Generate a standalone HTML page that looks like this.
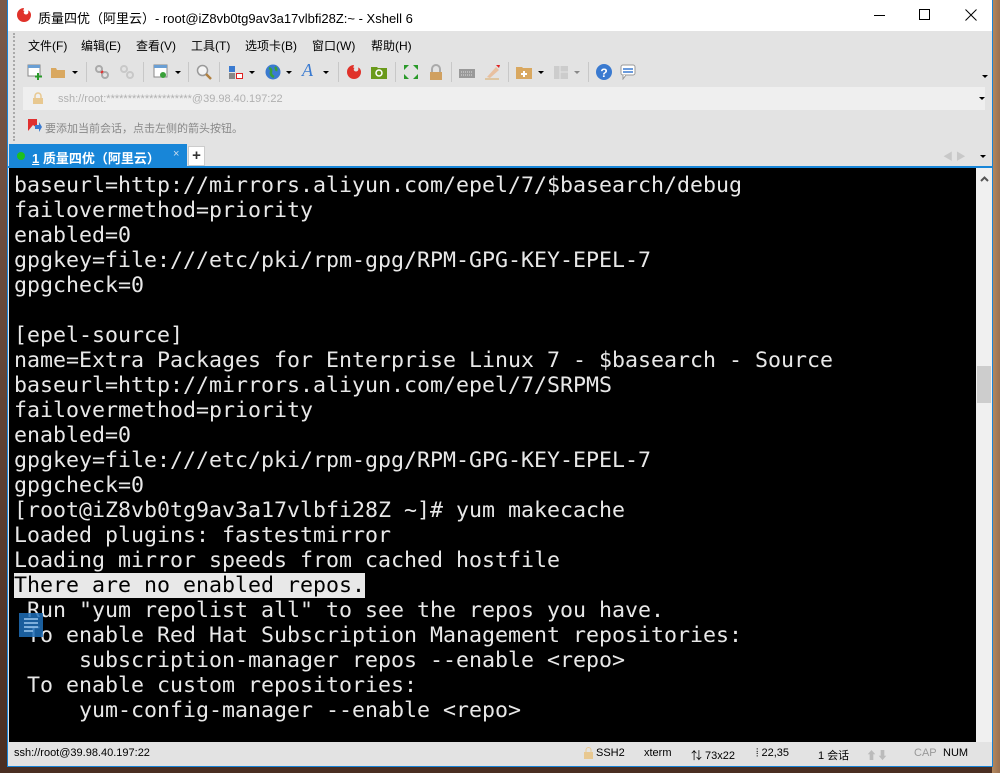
<!DOCTYPE html>
<html><head><meta charset="utf-8"><style>
*{margin:0;padding:0;box-sizing:border-box}
body{width:1000px;height:773px;overflow:hidden;background:#5a3a2a;position:relative;font-family:"Liberation Sans","Microsoft YaHei","Noto Sans CJK SC",sans-serif}
.abs{position:absolute}
#desk{position:absolute;left:0;top:0;width:1000px;height:773px;background:linear-gradient(180deg,#7a5a4a,#4a2e22)}
#desk2{position:absolute;right:0;top:0;width:8px;height:773px;background:linear-gradient(90deg,#b58a60,#9a7050)}
#win{position:absolute;left:7px;top:0;width:986px;height:767px;background:#e3e3e3;border:1px solid #1883d7;border-top:none}
#title{position:absolute;left:0;top:0;width:984px;height:31px;background:#fff;font-size:13px;color:#000}
.menu{position:absolute;top:37px;font-size:12px;color:#000}
.tb{position:absolute;top:64px;width:16px;height:16px}
.dd{position:absolute;top:71px;width:0;height:0;border-left:3px solid transparent;border-right:3px solid transparent;border-top:3px solid #000}
.sep{position:absolute;top:62px;width:1px;height:20px;background:#c8c8c8}
#term{position:absolute;left:1px;top:168px;width:967px;height:574px;background:#000;font-family:"DejaVu Sans Mono","Liberation Mono",monospace;font-size:21.6px;color:#e8e8e8;line-height:25px;padding:5px 0 0 5px;white-space:pre;overflow:hidden}
#term div{height:25px}
#sb{position:absolute;left:968px;top:168px;width:16px;height:574px;background:#f0f0f0}
#status{position:absolute;left:0;top:742px;width:984px;height:24px;background:#e3e3e3;font-size:11px;color:#000}
#status span{position:absolute;top:5px}
</style></head><body>
<div id="desk"></div><div id="desk2"></div>
<div id="win">
 <div id="title">
  <svg class="abs" style="left:8px;top:7px" width="16" height="16" viewBox="0 0 16 16"><path d="M8 1a7 7 0 1 0 7 7c0-2-1-4-3-4.5 1 2 0 4-2 4s-3-2-1.5-3.5C6 3 5 6 6 8" fill="#e0322a"/></svg>
  <span class="abs" style="left:30px;top:8px">质量四优（阿里云）- root@iZ8vb0tg9av3a17vlbfi28Z:~ - Xshell 6</span>
  <div class="abs" style="left:866px;top:15px;width:11px;height:1px;background:#000"></div>
  <div class="abs" style="left:911px;top:9px;width:11px;height:11px;border:1px solid #000"></div>
  <svg class="abs" style="left:957px;top:9px" width="12" height="12"><path d="M0.5 0.5L11.5 11.5M11.5 0.5L0.5 11.5" stroke="#000" stroke-width="1"/></svg>
 </div>
 <div class="abs" style="left:5px;top:33px;width:2px;height:108px;border-left:2px dotted #aaa"></div>
 <span class="menu" style="left:20px">文件(F)</span><span class="menu" style="left:73px">编辑(E)</span><span class="menu" style="left:128px">查看(V)</span><span class="menu" style="left:183px">工具(T)</span><span class="menu" style="left:237px">选项卡(B)</span><span class="menu" style="left:304px">窗口(W)</span><span class="menu" style="left:363px">帮助(H)</span>
 <svg class="tb" style="left:19px"><rect x="1" y="1" width="12" height="11" fill="#fff" stroke="#888"/><rect x="1" y="1" width="12" height="3" fill="#6a9fd4"/><path d="M11 9v7M8 12.5h7" stroke="#2a9a2a" stroke-width="2"/></svg>
 <svg class="tb" style="left:42px"><path d="M1 4h5l1 2h8v8H1z" fill="#d9a860"/></svg><div class="dd" style="left:64px"></div>
 <div class="sep" style="left:78px"></div>
 <svg class="tb" style="left:86px"><circle cx="5" cy="5" r="3" fill="none" stroke="#aaa" stroke-width="2"/><circle cx="11" cy="11" r="3" fill="none" stroke="#aaa" stroke-width="2"/><path d="M7 9l2-2" stroke="#e03030" stroke-width="2"/></svg>
 <svg class="tb" style="left:111px"><circle cx="5" cy="5" r="3" fill="none" stroke="#c8c8c8" stroke-width="2"/><circle cx="11" cy="11" r="3" fill="none" stroke="#c8c8c8" stroke-width="2"/></svg>
 <div class="sep" style="left:135px"></div>
 <svg class="tb" style="left:145px"><rect x="1" y="1" width="13" height="12" fill="#fff" stroke="#888"/><rect x="1" y="1" width="13" height="3" fill="#6a9fd4"/><circle cx="10" cy="11" r="3" fill="#3aa03a"/></svg><div class="dd" style="left:167px"></div>
 <div class="sep" style="left:180px"></div>
 <svg class="tb" style="left:188px"><circle cx="6.5" cy="6.5" r="5" fill="#f4f4f4" stroke="#999" stroke-width="1.5"/><path d="M10 10l5 5" stroke="#b08040" stroke-width="2.5"/></svg>
 <div class="sep" style="left:211px"></div>
 <svg class="tb" style="left:220px"><rect x="1" y="2" width="6" height="6" fill="#3a7ad0"/><rect x="1" y="9" width="6" height="6" fill="#888"/><rect x="8.5" y="9.5" width="6" height="5" fill="#fff" stroke="#e02020"/></svg><div class="dd" style="left:241px"></div>
 <svg class="tb" style="left:257px"><circle cx="8" cy="8" r="7.5" fill="#3a7ad0"/><path d="M4 4q3 1 2 4t3 5M10 3q2 2 1 4" stroke="#3aa03a" stroke-width="2.5" fill="none"/></svg><div class="dd" style="left:278px"></div>
 <span class="abs" style="left:294px;top:60px;font:italic 18px 'Liberation Serif',serif;color:#3a7ad0">A</span><div class="dd" style="left:315px"></div>
 <div class="sep" style="left:330px"></div>
 <svg class="tb" style="left:338px"><path d="M8 1a7 7 0 1 0 7 7c0-2-1-4-3-4.5 1 2 0 4-2 4s-3-2-1.5-3.5C6 3 5 6 6 8" fill="#e0322a"/></svg>
 <svg class="tb" style="left:363px"><path d="M0 3h6l1 1h9v11H0z" fill="#6a9a1a"/><circle cx="8" cy="9" r="3" fill="none" stroke="#fff" stroke-width="1.5"/></svg>
 <div class="sep" style="left:387px"></div>
 <svg class="tb" style="left:395px"><path d="M1 1h5L1 6zM15 1h-5l5 5zM1 15h5L1 10zM15 15h-5l5-5z" fill="#2a9a2a"/></svg>
 <svg class="tb" style="left:420px"><path d="M4 8V5a4 4 0 0 1 8 0v3" stroke="#aaa" stroke-width="2" fill="none"/><rect x="2" y="8" width="12" height="8" fill="#d0a060"/></svg>
 <div class="sep" style="left:443px"></div>
 <svg class="tb" style="left:451px"><rect x="0" y="5" width="16" height="9" fill="#999"/><path d="M2 8h12M2 11h12" stroke="#ddd" stroke-dasharray="1 1"/></svg>
 <svg class="tb" style="left:476px"><path d="M3 13L12 3l3 3-9 8z" fill="#e8c0a0"/><path d="M12 1l3 3 1-3z" fill="#e02020"/><path d="M1 15h14" stroke="#d9a860"/></svg>
 <div class="sep" style="left:500px"></div>
 <svg class="tb" style="left:508px"><path d="M0 3h6l1 1h9v11H0z" fill="#d9a860"/><path d="M8 7v6M5 10h6" stroke="#fff" stroke-width="2"/></svg><div class="dd" style="left:530px"></div>
 <svg class="tb" style="left:545px"><rect x="1" y="2" width="14" height="13" fill="#ccc"/><path d="M7 2v13M7 8h8" stroke="#e3e3e3"/></svg><div class="dd" style="left:566px;border-top-color:#888"></div>
 <div class="sep" style="left:580px"></div>
 <svg class="tb" style="left:588px"><circle cx="8" cy="8" r="8" fill="#3a7ad0"/><text x="8" y="13" font-size="12" font-weight="bold" fill="#fff" text-anchor="middle" font-family="Liberation Sans">?</text></svg>
 <svg class="tb" style="left:612px"><rect x="1" y="1" width="14" height="10" rx="2" fill="#fff" stroke="#999"/><path d="M3 11v4l3-4" fill="#fff" stroke="#999"/><path d="M3 5h10M3 8h10" stroke="#3a7ad0" stroke-width="1.5"/></svg>
 <div class="dd" style="left:974px;top:75px"></div>
 <div class="abs" style="left:15px;top:87px;width:962px;height:23px;background:#efefef;font-size:11px;color:#b0b0b0">
  <svg class="abs" style="left:9px;top:5px" width="12" height="12"><path d="M3 6V4a3 3 0 0 1 6 0v2" stroke="#e8c890" stroke-width="1.5" fill="none"/><rect x="1" y="6" width="10" height="6" fill="#e8c890"/></svg>
  <span class="abs" style="left:35px;top:6px">ssh://root:********************@39.98.40.197:22</span>
  <div class="dd" style="left:956px;top:10px"></div>
 </div>
 <svg class="abs" style="left:20px;top:119px" width="14" height="14"><path d="M0 0h9v9L5 6 0 12z" fill="#e03030"/><path d="M7 6h4V3l3 5-3 5v-3H7z" fill="#3a7ad0"/></svg>
 <span class="abs" style="left:37px;top:120px;font-size:11px;color:#888">要添加当前会话，点击左侧的箭头按钮。</span>
 <div class="abs" style="left:1px;top:144px;width:178px;height:24px;background:#1886d8;color:#fff;font-size:13px;font-weight:bold">
  <div class="abs" style="left:8px;top:8px;width:8px;height:8px;border-radius:50%;background:#1ec01e"></div>
  <span class="abs" style="left:23px;top:4px"><u>1</u> 质量四优（阿里云）</span>
  <span class="abs" style="left:164px;top:4px;font-weight:normal;font-size:11px;color:#cde">×</span>
 </div>
 <div class="abs" style="left:180px;top:146px;width:17px;height:20px;background:#fff;border:1px solid #ccc;font-size:15px;font-weight:bold;text-align:center;line-height:17px;color:#333">+</div>
 <span class="abs" style="left:935px;top:148px;font-size:10px;color:#c8c8c8">◀ ▶</span>
 <div class="dd" style="left:972px;top:155px"></div>
 <div class="abs" style="left:0;top:166px;width:984px;height:2px;background:#1886d8"></div>
 <div id="term"><div>baseurl=http://mirrors.aliyun.com/epel/7/$basearch/debug</div><div>failovermethod=priority</div><div>enabled=0</div><div>gpgkey=file:///etc/pki/rpm-gpg/RPM-GPG-KEY-EPEL-7</div><div>gpgcheck=0</div><div> </div><div>[epel-source]</div><div>name=Extra Packages for Enterprise Linux 7 - $basearch - Source</div><div>baseurl=http://mirrors.aliyun.com/epel/7/SRPMS</div><div>failovermethod=priority</div><div>enabled=0</div><div>gpgkey=file:///etc/pki/rpm-gpg/RPM-GPG-KEY-EPEL-7</div><div>gpgcheck=0</div><div>[root@iZ8vb0tg9av3a17vlbfi28Z ~]# yum makecache</div><div>Loaded plugins: fastestmirror</div><div>Loading mirror speeds from cached hostfile</div><div><span style="background:#e8e8e8;color:#000">There are no enabled repos.</span></div><div> Run "yum repolist all" to see the repos you have.</div><div> To enable Red Hat Subscription Management repositories:</div><div>     subscription-manager repos --enable &lt;repo&gt;</div><div> To enable custom repositories:</div><div>     yum-config-manager --enable &lt;repo&gt;</div></div>
 <svg class="abs" style="left:11px;top:613px" width="24" height="24"><rect width="24" height="24" fill="#1e6eb8" opacity=".85"/><path d="M5 6h14M5 10h14M5 14h14M5 18h9" stroke="#9cc8f0" stroke-width="1.5"/></svg>
 <div id="sb">
  <svg class="abs" style="left:4px;top:8px" width="9" height="6"><path d="M1 5l3.5-3.5L8 5" stroke="#555" stroke-width="2" fill="none"/></svg>
  <div class="abs" style="left:1px;top:198px;width:14px;height:37px;background:#cdcdcd"></div>
 </div>
 <div id="status">
  <span style="left:6px">ssh://root@39.98.40.197:22</span>
  <svg class="abs" style="left:576px;top:5px" width="9" height="12"><path d="M2 5V3a2.5 2.5 0 0 1 5 0v2" stroke="#e8c890" fill="none"/><rect x="0" y="5" width="9" height="7" fill="#e8c890"/></svg>
  <span style="left:588px">SSH2</span><span style="left:636px">xterm</span>
  <span style="left:683px">⇅ 73x22</span><span style="left:748px">⦙ 22,35</span><span style="left:810px">1 会话</span>
  <span style="left:858px;color:#bbb">⬆⬇</span><span style="left:906px;color:#999">CAP</span><span style="left:935px">NUM</span>
 </div>
</div>
</body></html>
